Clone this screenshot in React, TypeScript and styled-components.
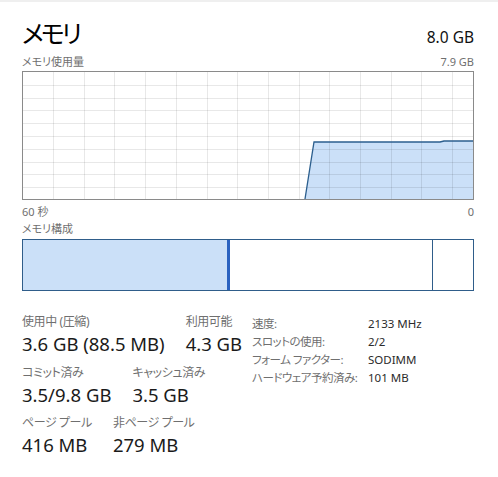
import styled, { createGlobalStyle } from 'styled-components'

const GlobalStyle = createGlobalStyle`
  html, body {
    margin: 0;
    padding: 0;
    background: #ffffff;
  }
  body {
    border-top: 2px solid #efefef;
    font-family: 'Noto Sans', 'Noto Sans CJK JP', sans-serif;
    font-feature-settings: 'palt' 1;
    color: #1a1a1a;
  }
`

const Page = styled.div`
  width: 452px;
  padding: 14px 24px 0 22px;
`

const Header = styled.div`
  display: flex;
  justify-content: space-between;
  align-items: baseline;
`

const Title = styled.h1`
  margin: 0;
  font-weight: 400;
  font-size: 25px;
  letter-spacing: -3px;
  line-height: 34px;
  color: #000;
`

const Total = styled.span`
  font-size: 15.5px;
  color: #111;
`

const LabelRow = styled.div<{ $top: number }>`
  display: flex;
  justify-content: space-between;
  margin-top: ${(p) => p.$top}px;
  font-size: 11px;
  line-height: 14px;
  color: #6f6f6f;
`

const ChartBox = styled.div`
  margin-top: 2px;
  height: 129px;
  border: 1px solid #8a8a8a;
  box-sizing: border-box;

  svg {
    display: block;
  }
`

const Composition = styled.div`
  margin-top: 3px;
  height: 52px;
  display: flex;
  border: 1px solid #2f5d8a;
  box-sizing: border-box;
`

const Segment = styled.div<{ $kind: 'used' | 'modified' | 'standby' | 'free' }>`
  height: 100%;
  flex: ${(p) => (p.$kind === 'free' ? '1 1 auto' : '0 0 auto')};
  background: ${(p) =>
    p.$kind === 'used' ? '#cbe0f8' : p.$kind === 'modified' ? '#2a62c0' : '#ffffff'};
  border-right: ${(p) => (p.$kind === 'standby' ? '1px solid #2f5d8a' : 'none')};
`

const Stats = styled.div`
  margin-top: 23px;
  display: grid;
  grid-template-columns: 230px 1fr;
`

const StatColumn = styled.div`
  display: flex;
  flex-direction: column;
`

const StatRow = styled.div<{ $top: number }>`
  display: flex;
  gap: 21px;
  margin-top: ${(p) => p.$top}px;
`

const Stat = styled.div`
  display: flex;
  flex-direction: column;
  gap: 3px;
`

const StatLabel = styled.span`
  font-size: 12px;
  line-height: 16px;
  letter-spacing: -0.4px;
  color: #6f6f6f;
  white-space: nowrap;
`

const StatValue = styled.span`
  font-size: 18.5px;
  line-height: 22px;
  color: #1a1a1a;
  white-space: nowrap;
`

const Info = styled.div`
  display: grid;
  grid-template-columns: 116px 1fr;
  grid-auto-rows: 18px;
  align-items: center;
  font-size: 12px;
`

const InfoKey = styled.span`
  color: #6f6f6f;
  font-size: 11.5px;
  letter-spacing: -0.5px;
  white-space: nowrap;
`

const InfoValue = styled.span`
  color: #2b2b2b;
  font-size: 11.5px;
  white-space: nowrap;
`

const W = 450
const H = 127

function UsageChart() {
  const cols: number[] = []
  for (let x = 30; x < W; x += 30.7) cols.push(Math.round(x) + 0.5)
  const rows: number[] = []
  for (let i = 1; i < 10; i++) rows.push(Math.round(i * 12.8) + 0.5)
  const line = '282,127 291,70 417,70 421,69 450,69'
  return (
    <svg width={W} height={H} viewBox={`0 0 ${W} ${H}`}>
      <polygon points={`${line} 450,127`} fill="#cbe0f8" />
      {cols.map((x) => (
        <line key={`c${x}`} x1={x} x2={x} y1={0} y2={H} stroke="rgba(0,0,0,0.09)" />
      ))}
      {rows.map((y) => (
        <line key={`r${y}`} x1={0} x2={W} y1={y} y2={y} stroke="rgba(0,0,0,0.09)" />
      ))}
      <polyline points={line} fill="none" stroke="#2c5f8e" strokeWidth={1.3} />
    </svg>
  )
}

const composition = [
  { kind: 'used' as const, width: 204 },
  { kind: 'modified' as const, width: 3 },
  { kind: 'standby' as const, width: 202 },
  { kind: 'free' as const, width: 0 },
]

export default function App() {
  return (
    <>
      <GlobalStyle />
      <Page>
        <Header>
          <Title>メモリ</Title>
          <Total>8.0 GB</Total>
        </Header>
        <LabelRow $top={5}>
          <span>メモリ使用量</span>
          <span>7.9 GB</span>
        </LabelRow>
        <ChartBox>
          <UsageChart />
        </ChartBox>
        <LabelRow $top={5}>
          <span>60 秒</span>
          <span>0</span>
        </LabelRow>
        <LabelRow $top={3}>
          <span>メモリ構成</span>
        </LabelRow>
        <Composition>
          {composition.map((s) => (
            <Segment
              key={s.kind}
              $kind={s.kind}
              style={s.width ? { width: s.width } : undefined}
            />
          ))}
        </Composition>
        <Stats>
          <StatColumn>
            <StatRow $top={0}>
              <Stat>
                <StatLabel>使用中 (圧縮)</StatLabel>
                <StatValue>3.6 GB (88.5 MB)</StatValue>
              </Stat>
              <Stat>
                <StatLabel>利用可能</StatLabel>
                <StatValue>4.3 GB</StatValue>
              </Stat>
            </StatRow>
            <StatRow $top={10}>
              <Stat>
                <StatLabel>コミット済み</StatLabel>
                <StatValue>3.5/9.8 GB</StatValue>
              </Stat>
              <Stat>
                <StatLabel>キャッシュ済み</StatLabel>
                <StatValue>3.5 GB</StatValue>
              </Stat>
            </StatRow>
            <StatRow $top={9}>
              <Stat>
                <StatLabel>ページ プール</StatLabel>
                <StatValue>416 MB</StatValue>
              </Stat>
              <Stat>
                <StatLabel>非ページ プール</StatLabel>
                <StatValue>279 MB</StatValue>
              </Stat>
            </StatRow>
          </StatColumn>
          <Info>
            <InfoKey>速度:</InfoKey>
            <InfoValue>2133 MHz</InfoValue>
            <InfoKey>スロットの使用:</InfoKey>
            <InfoValue>2/2</InfoValue>
            <InfoKey>フォーム ファクター:</InfoKey>
            <InfoValue>SODIMM</InfoValue>
            <InfoKey>ハードウェア予約済み:</InfoKey>
            <InfoValue>101 MB</InfoValue>
          </Info>
        </Stats>
      </Page>
    </>
  )
}
